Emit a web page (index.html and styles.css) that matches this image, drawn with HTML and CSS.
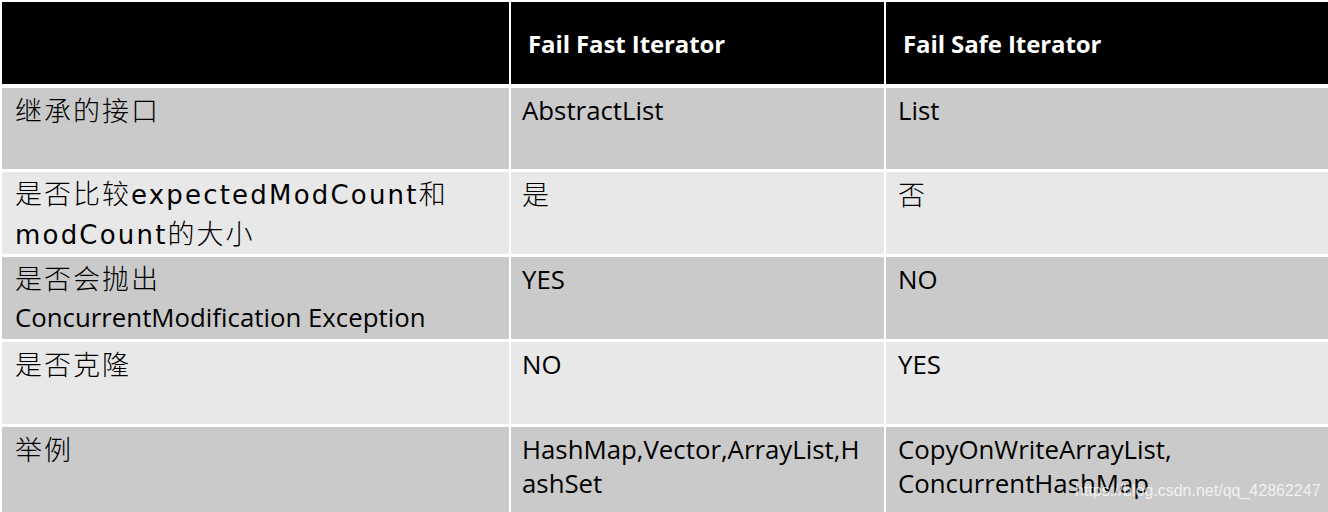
FILE: index.html
```html
<!DOCTYPE html>
<html lang="zh">
<head>
<meta charset="utf-8">
<title>Fail Fast vs Fail Safe</title>
<link rel="stylesheet" href="styles.css">
</head>
<body>
<div class="table">
  <div class="cell head"></div>
  <div class="cell head">Fail Fast Iterator</div>
  <div class="cell head">Fail Safe Iterator</div>

  <div class="cell odd first"><span class="zh">继承的接口</span></div>
  <div class="cell odd">AbstractList</div>
  <div class="cell odd col3">List</div>

  <div class="cell even first mixed"><span class="zh">是否比较</span><span class="yh">expectedModCount</span><span class="zh">和</span><br><span class="yh">modCount</span><span class="zh">的大小</span></div>
  <div class="cell even"><span class="zh">是</span></div>
  <div class="cell even col3"><span class="zh">否</span></div>

  <div class="cell odd first mixed"><span class="zh">是否会抛出</span><br>ConcurrentModification Exception</div>
  <div class="cell odd">YES</div>
  <div class="cell odd col3">NO</div>

  <div class="cell even first"><span class="zh">是否克隆</span></div>
  <div class="cell even">NO</div>
  <div class="cell even col3">YES</div>

  <div class="cell odd first"><span class="zh">举例</span></div>
  <div class="cell odd wrap">HashMap,Vector,ArrayList,HashSet</div>
  <div class="cell odd col3">CopyOnWriteArrayList,<br>ConcurrentHashMap<span class="mark">https://blog.csdn.net/qq_42862247</span></div>
</div>
</body>
</html>
```

FILE: styles.css
```css
html, body {
  margin: 0;
  padding: 0;
  background: #ffffff;
  overflow: hidden;
}
body {
  padding: 2px 0 0 2px;
  width: 1328px;
  height: 512px;
  box-sizing: border-box;
}
.table {
  display: grid;
  grid-template-columns: 507px 373px 442px;
  grid-template-rows: 83px 81px 82px 82px 82px 90px;
  column-gap: 2px;
  row-gap: 3px;
  font-family: "Open Sans", "Noto Sans CJK SC", sans-serif;
  font-size: 25.8px;
  line-height: 34px;
  color: #000;
}
.cell {
  padding: 5px 11px 0 11px;
  position: relative;
  overflow: hidden;
}
.first { padding-left: 13px; }
.col3 { padding-left: 12px; }
.head {
  background: #000;
  color: #fff;
  height: 82px;
  box-sizing: border-box;
  padding: 2px 0 0 17px;
  display: flex;
  align-items: center;
  font-weight: 700;
  font-size: 24px;
  letter-spacing: -0.1px;
}
.odd { background: #cacaca; }
.even { background: #e8e8e8; }
.zh {
  font-family: "Noto Sans CJK SC", sans-serif;
  font-size: 27px;
  letter-spacing: 2px;
  font-weight: 300;
}
.yh {
  font-family: "DejaVu Sans", sans-serif;
  font-size: 26px;
  letter-spacing: 2.2px;
}
.mixed {
  line-height: 38px;
  padding-top: 2px;
}
.wrap {
  word-break: break-all;
  padding-right: 16px;
}
.mark {
  position: absolute;
  left: 189px;
  top: 54px;
  font-family: "Liberation Sans", Arial, sans-serif;
  font-size: 16px;
  line-height: 20px;
  color: rgba(255, 255, 255, 0.75);
  white-space: nowrap;
}
```
